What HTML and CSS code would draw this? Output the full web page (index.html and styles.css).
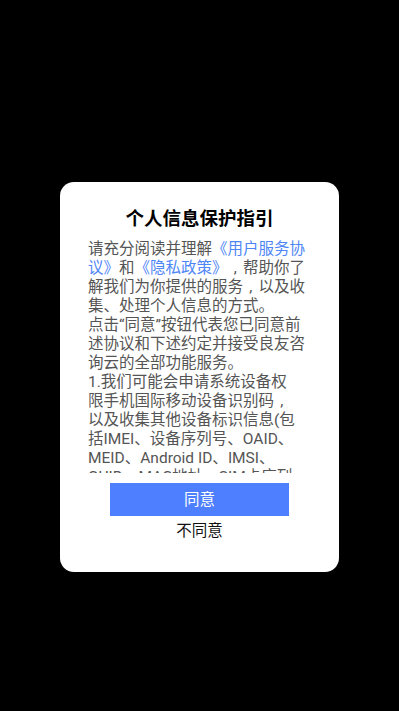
FILE: index.html
```html
<!DOCTYPE html>
<html lang="zh">
<head>
<meta charset="utf-8">
<link rel="stylesheet" href="styles.css">
</head>
<body>
<div class="screen">
  <div class="dialog">
    <h1 class="title">个人信息保护指引</h1>
    <div class="content">
      <p class="line">请充分阅读并理解<span class="link cjk">《</span><span class="link">用户服务协</span></p>
      <p class="line"><span class="link">议</span><span class="link cjk">》</span>和<span class="link cjk">《</span><span class="link">隐私政策</span><span class="link cjk">》</span><span class="comma">,</span>帮助你了</p>
      <p class="line">解我们为你提供的服务<span class="comma">,</span>以及收</p>
      <p class="line">集<span class="cjk">、</span>处理个人信息的方式<span class="cjk">。</span></p>
      <p class="line">点击“同意”按钮代表您已同意前</p>
      <p class="line">述协议和下述约定并接受良友咨</p>
      <p class="line">询云的全部功能服务<span class="cjk">。</span></p>
      <p class="line">1.我们可能会申请系统设备权</p>
      <p class="line">限手机国际移动设备识别码<span class="comma">,</span></p>
      <p class="line">以及收集其他设备标识信息(包</p>
      <p class="line">括IMEI<span class="cjk">、</span>设备序列号<span class="cjk">、</span>OAID<span class="cjk">、</span></p>
      <p class="line">MEID<span class="cjk">、</span>Android ID<span class="cjk">、</span>IMSI<span class="cjk">、</span></p>
      <p class="line">GUID<span class="cjk">、</span>MAC地址<span class="cjk">、</span>SIM卡序列</p>
      <p class="line">号)<span class="cjk">。</span></p>
    </div>
    <button class="agree">同意</button>
    <button class="disagree">不同意</button>
  </div>
</div>
</body>
</html>
```

FILE: styles.css
```css
html, body {
  margin: 0;
  padding: 0;
  background: #000;
}
body {
  font-family: Roboto, "Noto Sans CJK SC", sans-serif;
}
.screen {
  width: 399px;
  height: 711px;
  display: flex;
  flex-direction: column;
  align-items: center;
  padding-top: 182px;
  box-sizing: border-box;
}
.dialog {
  width: 279px;
  height: 390px;
  background: #fff;
  border-radius: 14px;
  display: flex;
  flex-direction: column;
  align-items: center;
  box-sizing: border-box;
  padding-top: 23px;
}
.title {
  margin: 0;
  font-size: 18.5px;
  font-weight: bold;
  color: #000;
  line-height: 28px;
  height: 28px;
}
.content {
  margin-top: 7px;
  width: 223px;
  height: 233px;
  overflow: hidden;
  align-self: flex-start;
  margin-left: 28px;
}
.line {
  margin: 0;
  font-size: 15.5px;
  line-height: 19px;
  height: 19px;
  color: #555;
  white-space: nowrap;
}
.cjk {
  font-family: "Noto Sans CJK SC", sans-serif;
  line-height: 1;
}
.comma {
  display: inline-block;
  width: 1em;
  text-align: center;
  line-height: 1;
}
.link {
  color: #4f86f7;
}
.agree {
  margin-top: 10px;
  width: 179px;
  height: 33px;
  border: none;
  background: #4d7ffe;
  color: #fff;
  font-family: inherit;
  font-size: 15.5px;
  padding: 0 0 4px 0;
}
.disagree {
  margin-top: 3px;
  border: none;
  background: none;
  color: #111;
  font-family: inherit;
  font-size: 15.5px;
  padding: 0;
  height: 24px;
  line-height: 24px;
}
```
